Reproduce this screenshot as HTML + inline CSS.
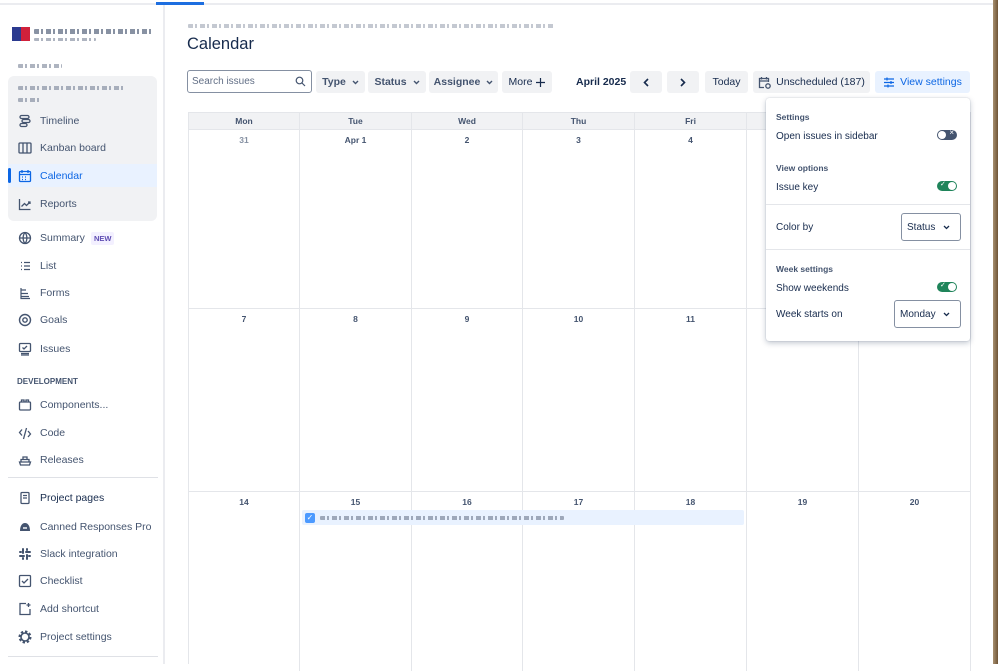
<!DOCTYPE html>
<html><head><meta charset="utf-8"><style>
*{box-sizing:border-box;margin:0;padding:0}
body{width:998px;height:664px;overflow:hidden;background:#fff;font-family:"Liberation Sans",sans-serif;color:#44546f;position:relative;font-size:11px}
.abs{position:absolute}
.topline{left:0;top:3px;width:994px;height:2px;background:#ebecf0}
.bluebar{left:156px;top:2px;width:48px;height:3px;background:#1d6ee0}
.brown{right:0;top:0;width:5px;height:664px;background:linear-gradient(90deg,#a89070,#6e5436)}
.sideborder{left:163px;top:5px;width:2px;height:659px;background:#ebecf0}
.blur{background:repeating-linear-gradient(90deg,#6b778c 0 5px,transparent 5px 7px,#6b778c 7px 9px,transparent 9px 12px);opacity:.55;height:4px;border-radius:1px}
.nav{position:absolute;left:18px;display:flex;align-items:center;font-size:10.5px;color:#44546f}
.nav svg{width:14px;height:14px;margin-right:8px;flex:none}
.gbox{left:8px;top:76px;width:149px;height:145px;background:#f1f2f4;border-radius:6px}
.btn{position:absolute;top:71px;height:22px;background:#f1f2f4;border-radius:3px;font-size:10.5px;font-weight:bold;color:#44546f;display:flex;align-items:center;justify-content:center}
.chev{margin-left:6px}
.grid{left:188px;top:112px;width:782px;height:552px;border-left:1px solid #e4e6ea}
.hd{position:absolute;top:0;height:17px;background:#f1f2f4;font-size:8.5px;font-weight:bold;color:#44546f;text-align:center;line-height:17px;border-right:1px solid #e4e6ea;border-top:1px solid #e4e6ea}
.cell{position:absolute;border-right:1px solid #e4e6ea;border-top:1px solid #e4e6ea;text-align:center;font-size:8.5px;font-weight:bold;color:#44546f;padding-top:5px}
.pop{left:766px;top:98px;width:204px;height:243px;background:#fff;border-radius:3px;box-shadow:0 2px 6px rgba(9,30,66,.25),0 0 1px rgba(9,30,66,.3)}
.pt{position:absolute;left:10px;font-size:8.5px;font-weight:bold;color:#44546f}
.pl{position:absolute;left:10px;font-size:10px;color:#172b4d}
.tog{position:absolute;left:171px;width:20px;height:10px;border-radius:5px}
.sel{position:absolute;border:1px solid #8590a2;border-radius:3px;font-size:10px;color:#172b4d;display:flex;align-items:center;padding-left:5px}
.sel svg{position:absolute;right:10px;top:11px}
.sep{position:absolute;left:0;width:204px;height:1px;background:#e4e6ea}
</style></head><body>
<div class="abs topline"></div><div class="abs bluebar"></div>
<div class="abs sideborder"></div>
<div class="abs brown"></div>

<div class="abs" style="left:12px;top:27px;width:18px;height:14px;background:linear-gradient(90deg,#2b3a8f 50%,#d0213b 50%)"></div>
<div class="abs blur" style="left:34px;top:29px;width:118px;height:5px;opacity:.8"></div>
<div class="abs blur" style="left:34px;top:38px;width:62px;height:3px"></div>
<div class="abs blur" style="left:18px;top:64px;width:44px;height:4px"></div>
<div class="abs gbox"></div>
<div class="abs blur" style="left:18px;top:86px;width:108px;height:4px"></div>
<div class="abs blur" style="left:18px;top:98px;width:22px;height:4px"></div>
<div class="abs" style="left:8px;top:164px;width:149px;height:23px;background:#e9f2ff"></div>
<div class="abs" style="left:8px;top:168px;width:3px;height:15px;background:#0c66e4;border-radius:2px"></div>

<div class="nav" style="top:114px"><svg viewBox="0 0 14 14" fill="none" stroke="#44546f" stroke-width="1.3"><rect x="2" y="1.5" width="9" height="3" rx="1.5"/><rect x="4" y="5.5" width="8" height="3" rx="1.5"/><rect x="2" y="9.5" width="7" height="3" rx="1.5"/></svg>Timeline</div>
<div class="nav" style="top:141px"><svg viewBox="0 0 14 14" fill="none" stroke="#44546f" stroke-width="1.3"><rect x="1" y="2" width="12" height="10" rx="1"/><path d="M5 2v10M9 2v10"/></svg>Kanban board</div>
<div class="nav" style="top:169px;color:#0c66e4"><svg viewBox="0 0 14 14" fill="none" stroke="#0c66e4" stroke-width="1.3"><rect x="1.5" y="2.5" width="11" height="10" rx="1"/><path d="M1.5 5.5h11M4 1v3M10 1v3"/><path d="M4 8h1M7 8h1M10 8h0M4 10.5h1M7 10.5h1" stroke-width="1.2"/></svg>Calendar</div>
<div class="nav" style="top:197px"><svg viewBox="0 0 14 14" fill="none" stroke="#44546f" stroke-width="1.3"><path d="M1.5 2v10.5h11"/><path d="M3.5 9.5l3-3 2 2 3.5-3.5M10 5h2v2"/></svg>Reports</div>
<div class="nav" style="top:231px"><svg viewBox="0 0 14 14" fill="none" stroke="#44546f" stroke-width="1.3"><circle cx="7" cy="7" r="5.5"/><path d="M1.5 7h11M7 1.5c-2.5 3-2.5 8 0 11M7 1.5c2.5 3 2.5 8 0 11"/></svg>Summary <span style="margin-left:6px;background:#f3f0ff;color:#5e4db2;font-size:7.5px;font-weight:bold;padding:2px 3px;border-radius:2px">NEW</span></div>
<div class="nav" style="top:259px"><svg viewBox="0 0 14 14" fill="none" stroke="#44546f" stroke-width="1.3"><path d="M3 3.5h1M3 7h1M3 10.5h1M6 3.5h6M6 7h6M6 10.5h6"/></svg>List</div>
<div class="nav" style="top:286px"><svg viewBox="0 0 14 14" fill="none" stroke="#44546f" stroke-width="1.2"><path d="M3 2v10.5h9M3 4h5M3 7.5h7M3 10.5h8"/></svg>Forms</div>
<div class="nav" style="top:313px"><svg viewBox="0 0 14 14" fill="none" stroke="#44546f" stroke-width="1.4"><circle cx="7" cy="7" r="5.5"/><circle cx="7" cy="7" r="2.2"/></svg>Goals</div>
<div class="nav" style="top:342px"><svg viewBox="0 0 14 14" fill="none" stroke="#44546f" stroke-width="1.3"><rect x="1.5" y="1.5" width="11" height="8" rx="1"/><path d="M4.5 5.5l1.5 1.5 3-3M3 11.5h8M3 13h8"/></svg>Issues</div>
<div class="abs" style="left:17px;top:377px;font-size:8px;font-weight:bold;color:#44546f">DEVELOPMENT</div>
<div class="nav" style="top:398px"><svg viewBox="0 0 14 14" fill="none" stroke="#44546f" stroke-width="1.3"><rect x="1.5" y="4" width="11" height="8" rx="1"/><path d="M3.5 4V2h2.5v2M8 4V2h2.5v2"/></svg>Components...</div>
<div class="nav" style="top:426px"><svg viewBox="0 0 14 14" fill="none" stroke="#44546f" stroke-width="1.3"><path d="M4 3.5L1.5 6.5 4 9.5M10 5l2.5 3L10 11M8.5 2l-3 11"/></svg>Code</div>
<div class="nav" style="top:453px"><svg viewBox="0 0 14 14" fill="none" stroke="#44546f" stroke-width="1.3"><path d="M1.5 9h11l-1 3h-9zM3 9V6.5h8V9M5 6.5V4h4v2.5"/></svg>Releases</div>
<div class="abs" style="left:8px;top:477px;width:150px;height:1px;background:#dfe1e6"></div>
<div class="nav" style="top:491px;color:#172b4d"><svg viewBox="0 0 14 14" fill="none" stroke="#44546f" stroke-width="1.3"><rect x="3" y="1.5" width="8" height="11" rx="1"/><path d="M5 4.5h4M5 7h4"/></svg>Project pages</div>
<div class="nav" style="top:520px"><svg viewBox="0 0 14 14"><path d="M2 11c0-5 2-8 5-8s5 3 5 8z" fill="#44546f"/><path d="M5 8h4" stroke="#fff" stroke-width="1.4"/></svg>Canned Responses Pro</div>
<div class="nav" style="top:547px"><svg viewBox="0 0 14 14" fill="none" stroke="#44546f" stroke-width="2" stroke-linecap="round"><path d="M5 2v4M9 8v4M2 9h4M8 5h4M9 2v1M5 11v1M2 5h1M11 9h1"/></svg>Slack integration</div>
<div class="nav" style="top:574px"><svg viewBox="0 0 14 14" fill="none" stroke="#44546f" stroke-width="1.3"><rect x="1.5" y="1.5" width="11" height="11" rx="1"/><path d="M4 7l2 2 4-4"/></svg>Checklist</div>
<div class="nav" style="top:602px"><svg viewBox="0 0 14 14" fill="none" stroke="#44546f" stroke-width="1.3"><path d="M8 1.5H2v11h10V7M10.5 1v4M8.5 3h4"/></svg>Add shortcut</div>
<div class="nav" style="top:630px"><svg viewBox="0 0 14 14"><circle cx="7" cy="7" r="5" fill="none" stroke="#44546f" stroke-width="3" stroke-dasharray="2.2 1.7"/><circle cx="7" cy="7" r="4" fill="none" stroke="#44546f" stroke-width="1.6"/></svg>Project settings</div>
<div class="abs" style="left:8px;top:656px;width:150px;height:1px;background:#dfe1e6"></div>

<div class="abs blur" style="left:188px;top:24px;width:366px;height:4px;opacity:.4"></div>
<div class="abs" style="left:187px;top:35px;font-size:16.5px;color:#172b4d">Calendar</div>

<div class="abs" style="left:187px;top:70px;width:125px;height:23px;border:1px solid #8590a2;border-radius:3px;font-size:10px;color:#626f86;padding:5px 0 0 4px">Search issues
<svg class="abs" style="right:5px;top:5px" width="11" height="11" viewBox="0 0 11 11" fill="none" stroke="#44546f" stroke-width="1.2"><circle cx="4.5" cy="4.5" r="3.3"/><path d="M7 7l3 3"/></svg></div>
<div class="btn" style="left:316px;width:49px">Type<svg class="chev" width="7" height="5" viewBox="0 0 7 5" fill="none" stroke="#44546f" stroke-width="1.4"><path d="M1 1l2.5 2.5L6 1"/></svg></div>
<div class="btn" style="left:368px;width:58px">Status<svg class="chev" width="7" height="5" viewBox="0 0 7 5" fill="none" stroke="#44546f" stroke-width="1.4"><path d="M1 1l2.5 2.5L6 1"/></svg></div>
<div class="btn" style="left:429px;width:69px">Assignee<svg class="chev" width="7" height="5" viewBox="0 0 7 5" fill="none" stroke="#44546f" stroke-width="1.4"><path d="M1 1l2.5 2.5L6 1"/></svg></div>
<div class="btn" style="left:502px;width:50px;font-weight:normal;color:#172b4d">More<svg style="margin-left:4px" width="9" height="9" viewBox="0 0 9 9" fill="none" stroke="#172b4d" stroke-width="1.2"><path d="M4.5 0v9M0 4.5h9"/></svg></div>
<div class="abs" style="left:576px;top:76px;font-size:10.5px;font-weight:bold;color:#172b4d">April 2025</div>
<div class="btn" style="left:630px;width:32px"><svg width="6" height="9" viewBox="0 0 6 9" fill="none" stroke="#172b4d" stroke-width="1.6"><path d="M5 1L1.5 4.5 5 8"/></svg></div>
<div class="btn" style="left:667px;width:32px"><svg width="6" height="9" viewBox="0 0 6 9" fill="none" stroke="#172b4d" stroke-width="1.6"><path d="M1 1l3.5 3.5L1 8"/></svg></div>
<div class="btn" style="left:705px;width:43px;font-weight:normal;color:#172b4d">Today</div>
<div class="btn" style="left:753px;width:117px;font-weight:normal;color:#172b4d"><svg width="13" height="13" viewBox="0 0 13 13" fill="none" stroke="#44546f" stroke-width="1.3" style="margin-right:5px"><path d="M6 11.5H1.5v-9h9V6M1.5 5h9M3.5 1v2.5M8.5 1v2.5"/><circle cx="10" cy="10" r="2.2"/></svg>Unscheduled (187)</div>
<div class="btn" style="left:875px;width:95px;background:#e9f2ff;color:#0c66e4;font-weight:normal"><svg width="12" height="12" viewBox="0 0 12 12" fill="none" stroke="#0c66e4" stroke-width="1.2" style="margin-right:5px"><path d="M1 3h10M1 6.5h10M1 10h10"/><path d="M4 1.5v3M8 5v3M5 8.5v3"/></svg>View settings</div>

<div class="abs grid">
<div class="hd" style="left:0;width:111px">Mon</div>
<div class="hd" style="left:111px;width:112px">Tue</div>
<div class="hd" style="left:223px;width:111px">Wed</div>
<div class="hd" style="left:334px;width:112px">Thu</div>
<div class="hd" style="left:446px;width:112px">Fri</div>
<div class="hd" style="left:558px;width:112px">Sat</div>
<div class="hd" style="left:670px;width:112px">Sun</div>

<div class="cell" style="left:0;top:17px;width:111px;height:179px;color:#8590a2">31</div>
<div class="cell" style="left:111px;top:17px;width:112px;height:179px">Apr 1</div>
<div class="cell" style="left:223px;top:17px;width:111px;height:179px">2</div>
<div class="cell" style="left:334px;top:17px;width:112px;height:179px">3</div>
<div class="cell" style="left:446px;top:17px;width:112px;height:179px">4</div>
<div class="cell" style="left:558px;top:17px;width:112px;height:179px">5</div>
<div class="cell" style="left:670px;top:17px;width:112px;height:179px">6</div>

<div class="cell" style="left:0;top:196px;width:111px;height:183px">7</div>
<div class="cell" style="left:111px;top:196px;width:112px;height:183px">8</div>
<div class="cell" style="left:223px;top:196px;width:111px;height:183px">9</div>
<div class="cell" style="left:334px;top:196px;width:112px;height:183px">10</div>
<div class="cell" style="left:446px;top:196px;width:112px;height:183px">11</div>
<div class="cell" style="left:558px;top:196px;width:112px;height:183px">12</div>
<div class="cell" style="left:670px;top:196px;width:112px;height:183px">13</div>

<div class="cell" style="left:0;top:379px;width:111px;height:180px">14</div>
<div class="cell" style="left:111px;top:379px;width:112px;height:180px">15</div>
<div class="cell" style="left:223px;top:379px;width:111px;height:180px">16</div>
<div class="cell" style="left:334px;top:379px;width:112px;height:180px">17</div>
<div class="cell" style="left:446px;top:379px;width:112px;height:180px">18</div>
<div class="cell" style="left:558px;top:379px;width:112px;height:180px">19</div>
<div class="cell" style="left:670px;top:379px;width:112px;height:180px">20</div>
</div>

<div class="abs" style="left:302px;top:510px;width:442px;height:15px;background:#e9f2ff;border-radius:2px"></div>
<div class="abs" style="left:305px;top:513px;width:10px;height:10px;background:#4c9aff;border-radius:2px;color:#fff;font-size:8px;line-height:10px;text-align:center">✓</div>
<div class="abs blur" style="left:320px;top:516px;width:244px;height:4px;opacity:.6"></div>

<div class="abs pop">
<div class="pt" style="top:14px">Settings</div>
<div class="pl" style="top:33px">Open issues in sidebar</div>
<div class="tog" style="top:32px;background:#44546f"><div style="position:absolute;left:1px;top:1px;width:8px;height:8px;border-radius:4px;background:#fff"></div><span style="position:absolute;right:3px;top:-2px;color:#fff;font-size:8px">×</span></div>
<div class="pt" style="top:65px">View options</div>
<div class="pl" style="top:84px">Issue key</div>
<div class="tog" style="top:83px;background:#1f845a"><div style="position:absolute;right:1px;top:1px;width:8px;height:8px;border-radius:4px;background:#fff"></div><span style="position:absolute;left:3px;top:-1px;color:#fff;font-size:7px">✓</span></div>
<div class="sep" style="top:106px"></div>
<div class="pl" style="top:124px">Color by</div>
<div class="sel" style="left:135px;top:115px;width:60px;height:28px">Status<svg width="7" height="5" viewBox="0 0 7 5" fill="none" stroke="#172b4d" stroke-width="1.3"><path d="M1 1l2.5 2.5L6 1"/></svg></div>
<div class="sep" style="top:151px"></div>
<div class="pt" style="top:166px">Week settings</div>
<div class="pl" style="top:185px">Show weekends</div>
<div class="tog" style="top:184px;background:#1f845a"><div style="position:absolute;right:1px;top:1px;width:8px;height:8px;border-radius:4px;background:#fff"></div><span style="position:absolute;left:3px;top:-1px;color:#fff;font-size:7px">✓</span></div>
<div class="pl" style="top:211px">Week starts on</div>
<div class="sel" style="left:128px;top:202px;width:67px;height:28px">Monday<svg width="7" height="5" viewBox="0 0 7 5" fill="none" stroke="#172b4d" stroke-width="1.3"><path d="M1 1l2.5 2.5L6 1"/></svg></div>
</div>
</body></html>
